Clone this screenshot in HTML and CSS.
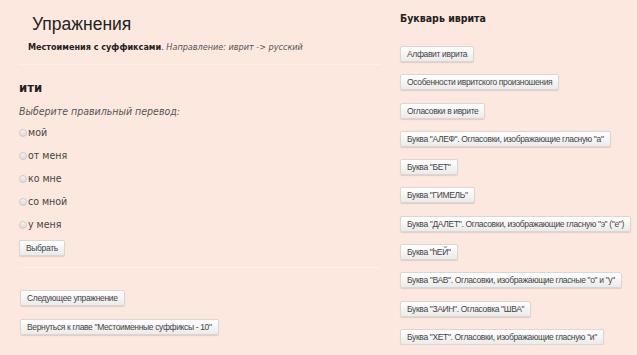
FILE: index.html
```html
<!DOCTYPE html>
<html lang="ru">
<head>
    <meta charset="UTF-8">
    <title>Упражнения</title>
    <link rel="stylesheet" href="styles.css">
</head>
<body>
    <div class="page">
        <div class="main">
            <div class="header">
                <h1>Упражнения</h1>
                <p class="subtitle"><strong>Местоимения с суффиксами</strong>. <em>Направление: иврит -&gt; русский</em></p>
            </div>

            <div class="exercise">
                <h2>ити</h2>
                <p class="hint">Выберите правильный перевод:</p>
                <form class="answers">
                    <label class="answer"><input type="radio" name="a">мой</label>
                    <label class="answer"><input type="radio" name="a">от меня</label>
                    <label class="answer"><input type="radio" name="a">ко мне</label>
                    <label class="answer"><input type="radio" name="a">со мной</label>
                    <label class="answer"><input type="radio" name="a">у меня</label>
                    <button type="button" class="btn">Выбрать</button>
                </form>
            </div>

            <div class="nav">
                <button class="btn">Следующее упражнение</button>
                <button class="btn">Вернуться к главе "Местоименные суффиксы - 10"</button>
            </div>
        </div>

        <div class="side">
            <h3>Букварь иврита</h3>
            <div class="links">
                <button class="btn">Алфавит иврита</button>
                <button class="btn">Особенности ивритского произношения</button>
                <button class="btn">Огласовки в иврите</button>
                <button class="btn">Буква "АЛЕФ". Огласовки, изображающие гласную "а"</button>
                <button class="btn">Буква "БЕТ"</button>
                <button class="btn">Буква "ГИМЕЛЬ"</button>
                <button class="btn">Буква "ДАЛЕТ". Огласовки, изображающие гласную "э" ("е")</button>
                <button class="btn">Буква "hЕЙ"</button>
                <button class="btn">Буква "ВАВ". Огласовки, изображающие гласные "о" и "у"</button>
                <button class="btn">Буква "ЗАИН". Огласовка "ШВА"</button>
                <button class="btn">Буква "ХЕТ". Огласовки, изображающие гласную "и"</button>
            </div>
        </div>
    </div>
</body>
</html>
```

FILE: styles.css
```css
body {
    margin: 0;
    background: #fde8df;
    color: #333;
    font-family: "DejaVu Sans Condensed", "DejaVu Sans", sans-serif;
    font-size: 10px;
    overflow: hidden;
}

.page {
    display: flex;
    gap: 20px;
    padding-left: 19px;
}

.main {
    width: 361px;
    flex-shrink: 0;
}

.header {
    border-bottom: 1px solid #fdf0ea;
    padding: 12px 0 11px 9px;
}

h1 {
    margin: 0;
    font-family: "Liberation Sans", Arial, sans-serif;
    font-size: 17.5px;
    font-weight: normal;
    line-height: 24px;
    color: #222;
    padding-left: 4px;
}

.subtitle {
    margin: 5px 0 0;
    font-size: 9px;
    line-height: 12px;
}

.subtitle strong {
    color: #222;
}

.subtitle em {
    color: #555;
}

.exercise {
    border-bottom: 1px solid #fdf0ea;
    padding: 15px 0 11px;
}

h2 {
    margin: 0;
    font-size: 13px;
    font-weight: bold;
    color: #222;
}

.hint {
    margin: 10px 0 0;
    font-style: italic;
    color: #555;
    font-size: 10.5px;
}

.answers {
    display: flex;
    flex-direction: column;
    align-items: flex-start;
    margin-top: 4px;
}

.answer {
    display: flex;
    align-items: center;
    height: 22.8px;
    font-size: 10.5px;
    color: #444;
}

.answer input {
    appearance: none;
    width: 8px;
    height: 8px;
    margin: 2px 1px 0 0;
    border: 1px solid #cfcac8;
    border-radius: 50%;
    background: linear-gradient(#f4f4f4, #dcdcdc);
}

.answers .btn {
    margin-top: 5px;
}

.btn {
    font-family: "Liberation Sans", Arial, sans-serif;
    font-size: 8.5px;
    letter-spacing: -0.35px;
    color: #444;
    height: 16px;
    padding: 0 6px;
    border: 1px solid #dcd6d3;
    border-radius: 2px;
    background: linear-gradient(#ffffff, #ebebeb);
    box-shadow: 0 1px 1px rgba(0, 0, 0, 0.12);
    white-space: nowrap;
}

.nav {
    display: flex;
    flex-direction: column;
    align-items: flex-start;
    gap: 13px;
    padding: 22px 0 0 1px;
}

.side {
    padding-top: 12px;
}

h3 {
    margin: 0;
    font-size: 10.5px;
    font-weight: bold;
    color: #222;
}

.links {
    display: flex;
    flex-direction: column;
    align-items: flex-start;
    gap: 12.3px;
    margin-top: 22px;
}
```
